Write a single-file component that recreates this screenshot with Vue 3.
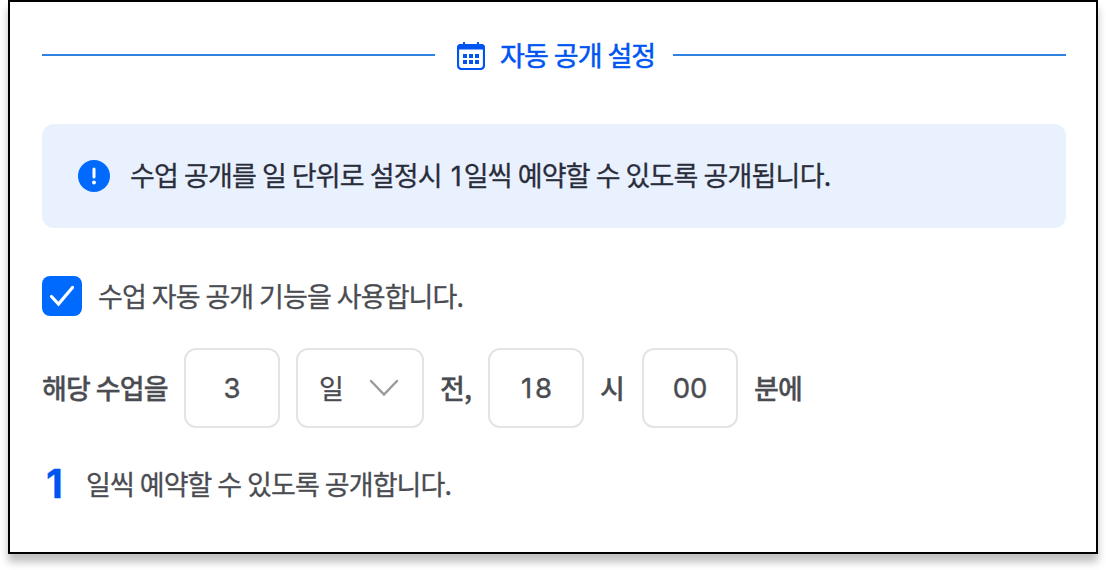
<template>
  <main class="page">
  <section class="panel">
    <div class="title-row">
      <span class="line"></span>
      <div class="title">
        <svg class="calendar" width="28" height="28" viewBox="0 0 28 28" fill="none" xmlns="http://www.w3.org/2000/svg">
          <rect x="1" y="3" width="26" height="24" rx="3.5" stroke="currentColor" stroke-width="2.2"/>
          <path d="M0 7.500V5.500A3.500 3.500 0 0 1 3.500 2H24.500A3.500 3.500 0 0 1 28 5.500V7.500Z" fill="currentColor"/>
          <path d="M7 1V4M21 1V4" stroke="currentColor" stroke-width="2.2" stroke-linecap="round"/>
          <path d="M6 12h4v4H6zM12 12h4v4h-4zM18 12h4v4h-4zM6 18h4v4H6zM12 18h4v4h-4zM18 18h4v4h-4z" fill="currentColor"/>
        </svg>
        <h2>자동 공개 설정</h2>
      </div>
      <span class="line"></span>
    </div>

    <div class="notice">
      <svg width="32" height="32" viewBox="0 0 32 32" fill="none" xmlns="http://www.w3.org/2000/svg">
        <circle cx="16" cy="16" r="16" fill="#006aff"/>
        <path d="M16 9V17" stroke="#fff" stroke-width="3" stroke-linecap="round"/>
        <circle cx="16" cy="22.500" r="1.900" fill="#fff"/>
      </svg>
      <p>수업 공개를 일 단위로 설정시 <span class="digit">1</span>일씩 예약할 수 있도록 공개됩니다.</p>
    </div>

    <div class="check-row" @click="enabled = !enabled">
      <span class="checkbox" :class="{ on: enabled }">
        <svg v-if="enabled" width="40" height="40" viewBox="0 0 40 40" fill="none" xmlns="http://www.w3.org/2000/svg">
          <path d="M9.500 20.500L16.500 28L30.500 11.500" stroke="#fff" stroke-width="3.200" stroke-linecap="round"/>
        </svg>
      </span>
      <span class="check-label">수업 자동 공개 기능을 사용합니다.</span>
    </div>

    <div class="time-row">
      <span class="word lesson">해당 수업을</span>
      <input v-model="days" class="field" />
      <button class="select">
        <span>일</span>
        <svg width="30" height="18" viewBox="0 0 30 18" fill="none" xmlns="http://www.w3.org/2000/svg">
          <path d="M2 2L15 15.500L28 2" stroke="#999b9f" stroke-width="2.500" stroke-linecap="round"/>
        </svg>
      </button>
      <span class="word before">전,</span>
      <input v-model="hour" class="field hour-field" />
      <span class="word hour">시</span>
      <input v-model="minute" class="field" />
      <span class="word">분에</span>
    </div>

    <div class="result-row">
      <strong>1</strong>
      <span>일씩 예약할 수 있도록 공개합니다.</span>
    </div>
  </section>
  </main>
</template>

<script setup>
import { ref } from 'vue'

const enabled = ref(true)
const days = ref('3')
const hour = ref('18')
const minute = ref('00')
</script>

<style>
body {
  background: #fff;
}
</style>

<style scoped>
.page {
  height: 570px;
  overflow: hidden;
}
.panel {
  box-sizing: border-box;
  width: 1090px; height: 554px;
  margin-left: 8px;
  padding: 32px 30px 0 32px;
  border: 2px solid #000;
  background: #fff;
  box-shadow: 0 8px 8px rgba(0, 0, 0, 0.25);
  font-family: "Noto Sans CJK KR", sans-serif;
  font-size: 27px; line-height: 40px;
  letter-spacing: -0.88px; word-spacing: 0.6px;
  color: #4a4c52;
  white-space: nowrap;
  -webkit-text-stroke: 0.3px currentColor;
}

.title-row {
  display: flex; align-items: center;
  height: 42px;
}
.line {
  flex: 1; height: 2px;
  background: #3182e0;
}
.title {
  display: flex; align-items: center; gap: 15px;
  width: 238px; box-sizing: border-box;
  padding-left: 22px;
  color: #0055f2;
}
.calendar { flex: none; margin-top: 2px; }
.title h2 {
  margin: 0;
  font-size: 27px; font-weight: 400;
  -webkit-text-stroke-width: 0.5px;
}

.notice {
  display: flex; align-items: center; gap: 20px;
  height: 104px; box-sizing: border-box;
  margin-top: 48px; padding: 0 36px;
  border-radius: 12px;
  background: #e9f1ff;
  color: #292d3a;
}
.notice p { margin: 0; letter-spacing: -0.8px; }
.digit {
  display: inline-block; box-sizing: border-box;
  width: 16px; padding-left: 3px;
  font-family: Inter, sans-serif;
}

.check-row {
  display: flex; align-items: center; gap: 16px;
  height: 40px; margin-top: 48px;
}
.checkbox {
  width: 40px; height: 40px; box-sizing: border-box;
  border: 2px solid #e2e2e4; border-radius: 8px;
}
.checkbox.on { border: none; background: #006aff; }
.checkbox svg { display: block; }

.time-row {
  display: flex; align-items: center;
  height: 80px; margin-top: 32px;
}
.word { font-weight: 500; }
.lesson { width: 142px; }
.before { width: 48px; margin-left: 16px; }
.hour { width: 42px; margin-left: 16px; }
.field + .word:last-child { margin-left: 16px; }
.field {
  width: 96px; height: 80px; box-sizing: border-box;
  padding: 0; border: 2px solid #e4e4e5; border-radius: 12px;
  background: #fff; color: #4a4c52;
  font: 400 27.5px Inter, sans-serif;
  text-align: center; outline: none;
  -webkit-text-stroke: 0.4px currentColor;
}
.hour-field { letter-spacing: 3px; padding-left: 4px; }
.select {
  display: flex; align-items: center; justify-content: space-between;
  width: 128px; height: 80px; box-sizing: border-box;
  margin-left: 16px; padding: 0 23px 0 21px;
  border: 2px solid #e4e4e5; border-radius: 12px;
  background: #fff; color: #4a4c52;
  font: inherit;
}

.result-row {
  display: flex; align-items: center;
  height: 48px; margin-top: 32px;
}
.result-row strong {
  width: 44px; box-sizing: border-box; padding-left: 4px;
  font: 700 39px/48px Inter, sans-serif;
  color: #0055f2;
}
</style>
